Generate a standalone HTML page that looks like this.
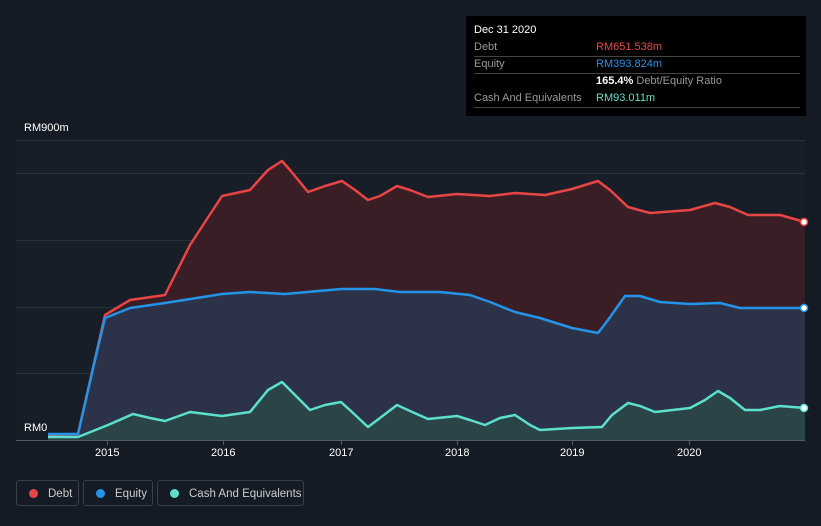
<!DOCTYPE html><html><head><meta charset="utf-8"><style>
body{margin:0;width:821px;height:526px;background:#151b24;font-family:"Liberation Sans",sans-serif;overflow:hidden;position:relative}
.t{position:absolute;color:#fff;font-size:11px}
.tip{position:absolute;left:466px;top:16px;width:340px;height:100px;background:#000;font-size:11px}
.tip .r{position:absolute;left:8px;right:6px;border-bottom:1px solid #444;height:17px;line-height:17px;color:#999}
.tip span{position:absolute;left:122px}
.leg{position:absolute;top:480px;height:26px;border:1px solid #3a4049;border-radius:3px;color:#ccc;font-size:11.5px;line-height:26px;box-sizing:border-box;white-space:nowrap;overflow:hidden}
.leg i{display:inline-block;width:9px;height:9px;border-radius:50%;margin:0 10px 0 12px;vertical-align:-1px}
</style></head><body>
<svg width="821" height="526" style="position:absolute;left:0;top:0">
<rect x="16" y="140" width="789" height="300" fill="#181e28"/>
<g stroke="#2a303a" stroke-width="1">
<line x1="16" y1="140.5" x2="805" y2="140.5"/><line x1="16" y1="173.5" x2="805" y2="173.5"/><line x1="16" y1="240.5" x2="805" y2="240.5"/><line x1="16" y1="307.5" x2="805" y2="307.5"/><line x1="16" y1="373.5" x2="805" y2="373.5"/></g>
<polygon fill="#3a1e25" points="48,435 78,434 105,315 130,300 165,295 190,245 222,196 250,190 268,170 282,161 290,170 308,192 325,186 342,181 355,190 368,200 380,196 397,186 410,190 428,197 457,194 490,196 515,193 545,195 572,189 598,181 610,190 628,207 650,213 690,210 715,203 730,207 748,215 780,215 805,222 805,440 48,440"/>
<polygon fill="#2c3248" points="48,434 78,434 95,360 105,318 130,308 165,303 222,294 250,292 285,294 341,289 375,289 400,292 440,292 470,295 490,302 515,312 540,318 572,328 598,333 608,320 625,296 640,296 660,302 690,304 720,303 740,308 805,308 805,440 48,440"/>
<polygon fill="#2a4448" points="48,437 78,437 108,425 133,414 150,418 165,421 190,412 222,416 250,412 268,390 282,382 295,395 310,410 325,405 341,402 352,412 368,427 380,418 397,405 410,411 428,419 457,416 470,420 485,425 500,418 515,415 530,425 540,430 572,428 602,427 612,415 628,403 640,406 655,412 690,408 705,400 718,391 730,398 745,410 760,410 780,406 805,408 805,440 48,440"/>
<g fill="none" stroke-width="2.5" stroke-linejoin="round">
<polyline stroke="#e84545" points="48,435 78,434 105,315 130,300 165,295 190,245 222,196 250,190 268,170 282,161 290,170 308,192 325,186 342,181 355,190 368,200 380,196 397,186 410,190 428,197 457,194 490,196 515,193 545,195 572,189 598,181 610,190 628,207 650,213 690,210 715,203 730,207 748,215 780,215 805,222"/>
<polyline stroke="#2394e8" points="48,434 78,434 95,360 105,318 130,308 165,303 222,294 250,292 285,294 341,289 375,289 400,292 440,292 470,295 490,302 515,312 540,318 572,328 598,333 608,320 625,296 640,296 660,302 690,304 720,303 740,308 805,308"/>
<polyline stroke="#5ce0cc" points="48,437 78,437 108,425 133,414 150,418 165,421 190,412 222,416 250,412 268,390 282,382 295,395 310,410 325,405 341,402 352,412 368,427 380,418 397,405 410,411 428,419 457,416 470,420 485,425 500,418 515,415 530,425 540,430 572,428 602,427 612,415 628,403 640,406 655,412 690,408 705,400 718,391 730,398 745,410 760,410 780,406 805,408"/>
</g>
<circle cx="804" cy="222" r="3.5" fill="#fff" stroke="#e84545" stroke-width="1.5"/>
<circle cx="804" cy="308" r="3.5" fill="#fff" stroke="#2394e8" stroke-width="1.5"/>
<circle cx="804" cy="408" r="3.5" fill="#fff" stroke="#5ce0cc" stroke-width="1.5"/>
<line x1="16" y1="440.5" x2="805" y2="440.5" stroke="#555b64"/>
<g stroke="#555b64"><line x1="107.5" y1="440" x2="107.5" y2="445"/><line x1="223.5" y1="440" x2="223.5" y2="445"/><line x1="341.5" y1="440" x2="341.5" y2="445"/><line x1="457.5" y1="440" x2="457.5" y2="445"/><line x1="572.5" y1="440" x2="572.5" y2="445"/><line x1="689.5" y1="440" x2="689.5" y2="445"/></g>
</svg>
<div class="t" style="left:24px;top:122px">RM900m</div>
<div class="t" style="left:24px;top:422px">RM0</div>
<div class="t" style="left:95px;top:447px">2015</div>
<div class="t" style="left:211px;top:447px">2016</div>
<div class="t" style="left:329px;top:447px">2017</div>
<div class="t" style="left:445px;top:447px">2018</div>
<div class="t" style="left:560px;top:447px">2019</div>
<div class="t" style="left:677px;top:447px">2020</div>
<div class="tip">
<div style="position:absolute;left:8px;top:8px;color:#fff">Dec 31 2020</div>
<div class="r" style="top:23px">Debt<span style="color:#e84545">RM651.538m</span></div>
<div class="r" style="top:40px">Equity<span style="color:#2394e8">RM393.824m</span></div>
<div class="r" style="top:57px;border:0"><span style="color:#999"><b style="color:#fff;font-weight:bold">165.4%</b> Debt/Equity Ratio</span></div>
<div class="r" style="top:74px">Cash And Equivalents<span style="color:#5ce0cc">RM93.011m</span></div>
</div>
<div class="leg" style="left:16px;width:63px"><i style="background:#e84545"></i>Debt</div>
<div class="leg" style="left:83px;width:70px"><i style="background:#2394e8"></i>Equity</div>
<div class="leg" style="left:157px;width:147px"><i style="background:#5ce0cc"></i>Cash And Equivalents</div>
</body></html>
